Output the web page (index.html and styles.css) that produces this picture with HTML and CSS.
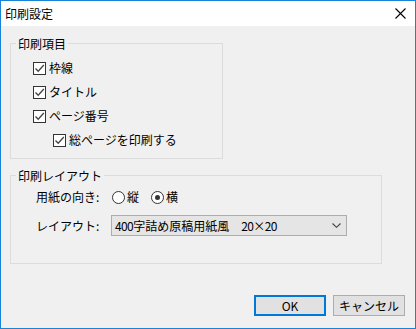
FILE: index.html
```html
<!DOCTYPE html>
<html lang="ja">
<head>
<meta charset="utf-8">
<link rel="stylesheet" href="styles.css">
</head>
<body>
<div class="window">
  <div class="titlebar">
    <span class="title">印刷設定</span>
    <svg class="close" width="11" height="11" viewBox="0 0 11 11"><path d="M0.5 0.5 L10.5 10.5 M10.5 0.5 L0.5 10.5" stroke="#000" stroke-width="1.1" fill="none"/></svg>
  </div>
  <div class="content">
    <fieldset class="group g1">
      <legend>印刷項目</legend>
      <div class="items">
        <div class="check"><span class="box"><svg width="11" height="11" viewBox="0 0 11 11"><path d="M1.5 5.5 L4.2 8.3 L9.8 2" stroke="#444" stroke-width="1.3" fill="none"/></svg></span>枠線</div>
        <div class="check"><span class="box"><svg width="11" height="11" viewBox="0 0 11 11"><path d="M1.5 5.5 L4.2 8.3 L9.8 2" stroke="#444" stroke-width="1.3" fill="none"/></svg></span>タイトル</div>
        <div class="check"><span class="box"><svg width="11" height="11" viewBox="0 0 11 11"><path d="M1.5 5.5 L4.2 8.3 L9.8 2" stroke="#444" stroke-width="1.3" fill="none"/></svg></span>ページ番号</div>
        <div class="check sub"><span class="box"><svg width="11" height="11" viewBox="0 0 11 11"><path d="M1.5 5.5 L4.2 8.3 L9.8 2" stroke="#444" stroke-width="1.3" fill="none"/></svg></span>総ページを印刷する</div>
      </div>
    </fieldset>
    <fieldset class="group g2">
      <legend>印刷レイアウト</legend>
      <div class="form">
        <span class="lbl">用紙の向き:</span>
        <div class="radios">
          <span class="radio"><span class="circle"></span>縦</span>
          <span class="radio"><span class="circle on"></span>横</span>
        </div>
        <span class="lbl">レイアウト:</span>
        <div class="select">
          <span class="value"><span class="num">400</span>字詰め原稿用紙風　<span class="num">20×20</span></span>
          <svg class="arrow" width="9" height="5" viewBox="0 0 9 5"><path d="M0.5 0.5 L4.5 4.3 L8.5 0.5" stroke="#444" stroke-width="1.1" fill="none"/></svg>
        </div>
      </div>
    </fieldset>
    <div class="buttons">
      <div class="btn default">OK</div>
      <div class="btn">キャンセル</div>
    </div>
  </div>
</div>
</body>
</html>
```
FILE: styles.css
```css
* { box-sizing: border-box; }
html, body { margin: 0; padding: 0; }
body {
  width: 416px;
  height: 329px;
  font-family: "Noto Sans CJK JP", "Noto Sans", sans-serif;
  font-size: 12px;
  color: #000;
  background: #f0f0f0;
}
.window {
  width: 416px;
  height: 329px;
  border: 1px solid #1883d7;
  display: flex;
  flex-direction: column;
  background: #f0f0f0;
}
.titlebar {
  height: 25px;
  background: #fff;
  display: flex;
  align-items: center;
  padding-left: 4px;
  flex: none;
}
.title { line-height: 14px; }
.close { margin-left: auto; margin-right: 9px; }
.content {
  flex: 1;
  display: flex;
  flex-direction: column;
  padding: 0 0 12px 9px;
}
.group {
  margin: 0;
  padding: 0;
  border: 1px solid #dcdcdc;
  min-width: 0;
}
.group legend {
  margin-left: 5px;
  padding: 0 2px;
  line-height: 15px;
}
.g1 { width: 213px; margin-top: 10px; }
.g2 { width: 372px; margin-top: 9px; }
.items { padding: 5px 0 6px 22px; }
.check {
  height: 24px;
  display: flex;
  align-items: center;
  line-height: 14px;
}
.check.sub { padding-left: 20px; }
.box {
  width: 13px;
  height: 13px;
  border: 1px solid #333;
  background: #fff;
  margin-right: 3px;
  display: flex;
  flex: none;
}
.form {
  display: grid;
  grid-template-columns: 75px 236px;
  grid-template-rows: 22px 21px;
  row-gap: 7px;
  padding: 3px 0 27px 25px;
  align-items: center;
}
.lbl { line-height: 14px; }
.radios { display: flex; align-items: center; margin-left: 1px; }
.radio { display: flex; align-items: center; margin-right: 12px; line-height: 14px; }
.circle {
  width: 13px;
  height: 13px;
  border: 1px solid #333;
  border-radius: 50%;
  background: #fff;
  margin-right: 2px;
  display: flex;
  align-items: center;
  justify-content: center;
}
.circle.on::after {
  content: "";
  width: 5px;
  height: 5px;
  border-radius: 50%;
  background: #333;
}
.select {
  height: 21px;
  border: 1px solid #adadad;
  background: #e5e5e5;
  display: flex;
  align-items: center;
  padding: 0 5px 0 3px;
}
.value { line-height: 14px; flex: 1; }
.num { letter-spacing: -0.6px; }
.buttons {
  margin-top: auto;
  display: flex;
  justify-content: flex-end;
  gap: 7px;
  padding-right: 10px;
}
.btn {
  width: 72px;
  height: 21px;
  border: 1px solid #adadad;
  background: #e1e1e1;
  display: flex;
  align-items: center;
  justify-content: center;
  line-height: 14px;
}
.btn.default { border: 2px solid #0078d7; }
```
